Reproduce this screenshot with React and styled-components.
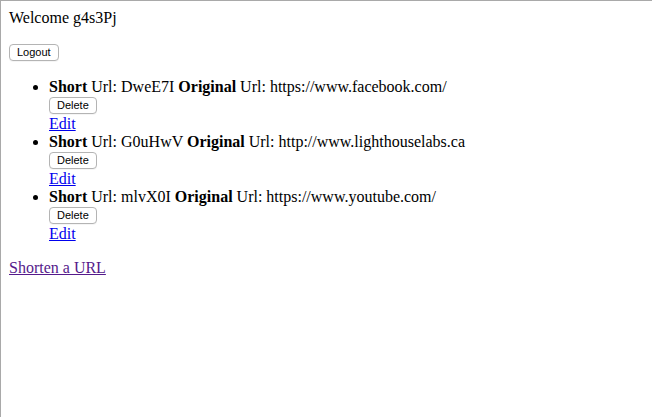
import React from "react";
import styled, { createGlobalStyle } from "styled-components";

const Global = createGlobalStyle`
  html, body { margin: 0; padding: 0; background: #fff; }
  body { font-family: "Liberation Serif", "Times New Roman", serif; font-size: 16px; line-height: 18px; color: #000; }
`;

const Frame = styled.div`
  box-sizing: border-box;
  min-height: 100vh;
  border-top: 1px solid #a9a9a9;
  border-left: 1px solid #a9a9a9;
  padding: 8px;
`;

const Line = styled.div`
  height: 18px;
`;

const Spacer = styled.div`
  height: ${(p) => p.$h}px;
`;

const ButtonRow = styled.form`
  margin: 0;
  height: ${(p) => p.$h}px;
  display: flex;
  align-items: flex-start;
  padding-top: ${(p) => p.$top}px;
  box-sizing: border-box;
`;

const Button = styled.button`
  font-family: "Liberation Sans", Arial, Helvetica, sans-serif;
  font-size: 11px;
  line-height: 13px;
  height: 17px;
  padding: 0 7px;
  background: #fff;
  color: #000;
  border: 1px solid #b4b4b4;
  border-radius: 4px;
  box-shadow: 0 1px 0 rgba(0, 0, 0, 0.04);
  cursor: pointer;
`;

const List = styled.ul`
  margin: 16px 0;
  padding-left: 40px;
  list-style: disc;
`;

const Item = styled.li`
  line-height: 18px;
`;

const Link = styled.a`
  color: ${(p) => (p.$visited ? "#551a8b" : "#0000ee")};
  text-decoration: underline;
  display: inline-block;
  height: 18px;
`;

const urls = [
  { short: "DweE7I", long: "https://www.facebook.com/" },
  { short: "G0uHwV", long: "http://www.lighthouselabs.ca" },
  { short: "mlvX0I", long: "https://www.youtube.com/" },
];

export default function App() {
  return (
    <>
      <Global />
      <Frame>
        <Line>Welcome g4s3Pj</Line>
        <Spacer $h={17} />
        <ButtonRow $h={18} $top={0}>
          <Button type="button">Logout</Button>
        </ButtonRow>
        <List>
          {urls.map((u) => (
            <Item key={u.short}>
              <Line>
                <b>Short</b> Url: {u.short} <b>Original</b> Url: {u.long}
              </Line>
              <ButtonRow $h={19} $top={1}>
                <Button type="button">Delete</Button>
              </ButtonRow>
              <Line>
                <Link href="#">Edit</Link>
              </Line>
            </Item>
          ))}
        </List>
        <Line>
          <Link href="#" $visited>
            Shorten a URL
          </Link>
        </Line>
      </Frame>
    </>
  );
}
